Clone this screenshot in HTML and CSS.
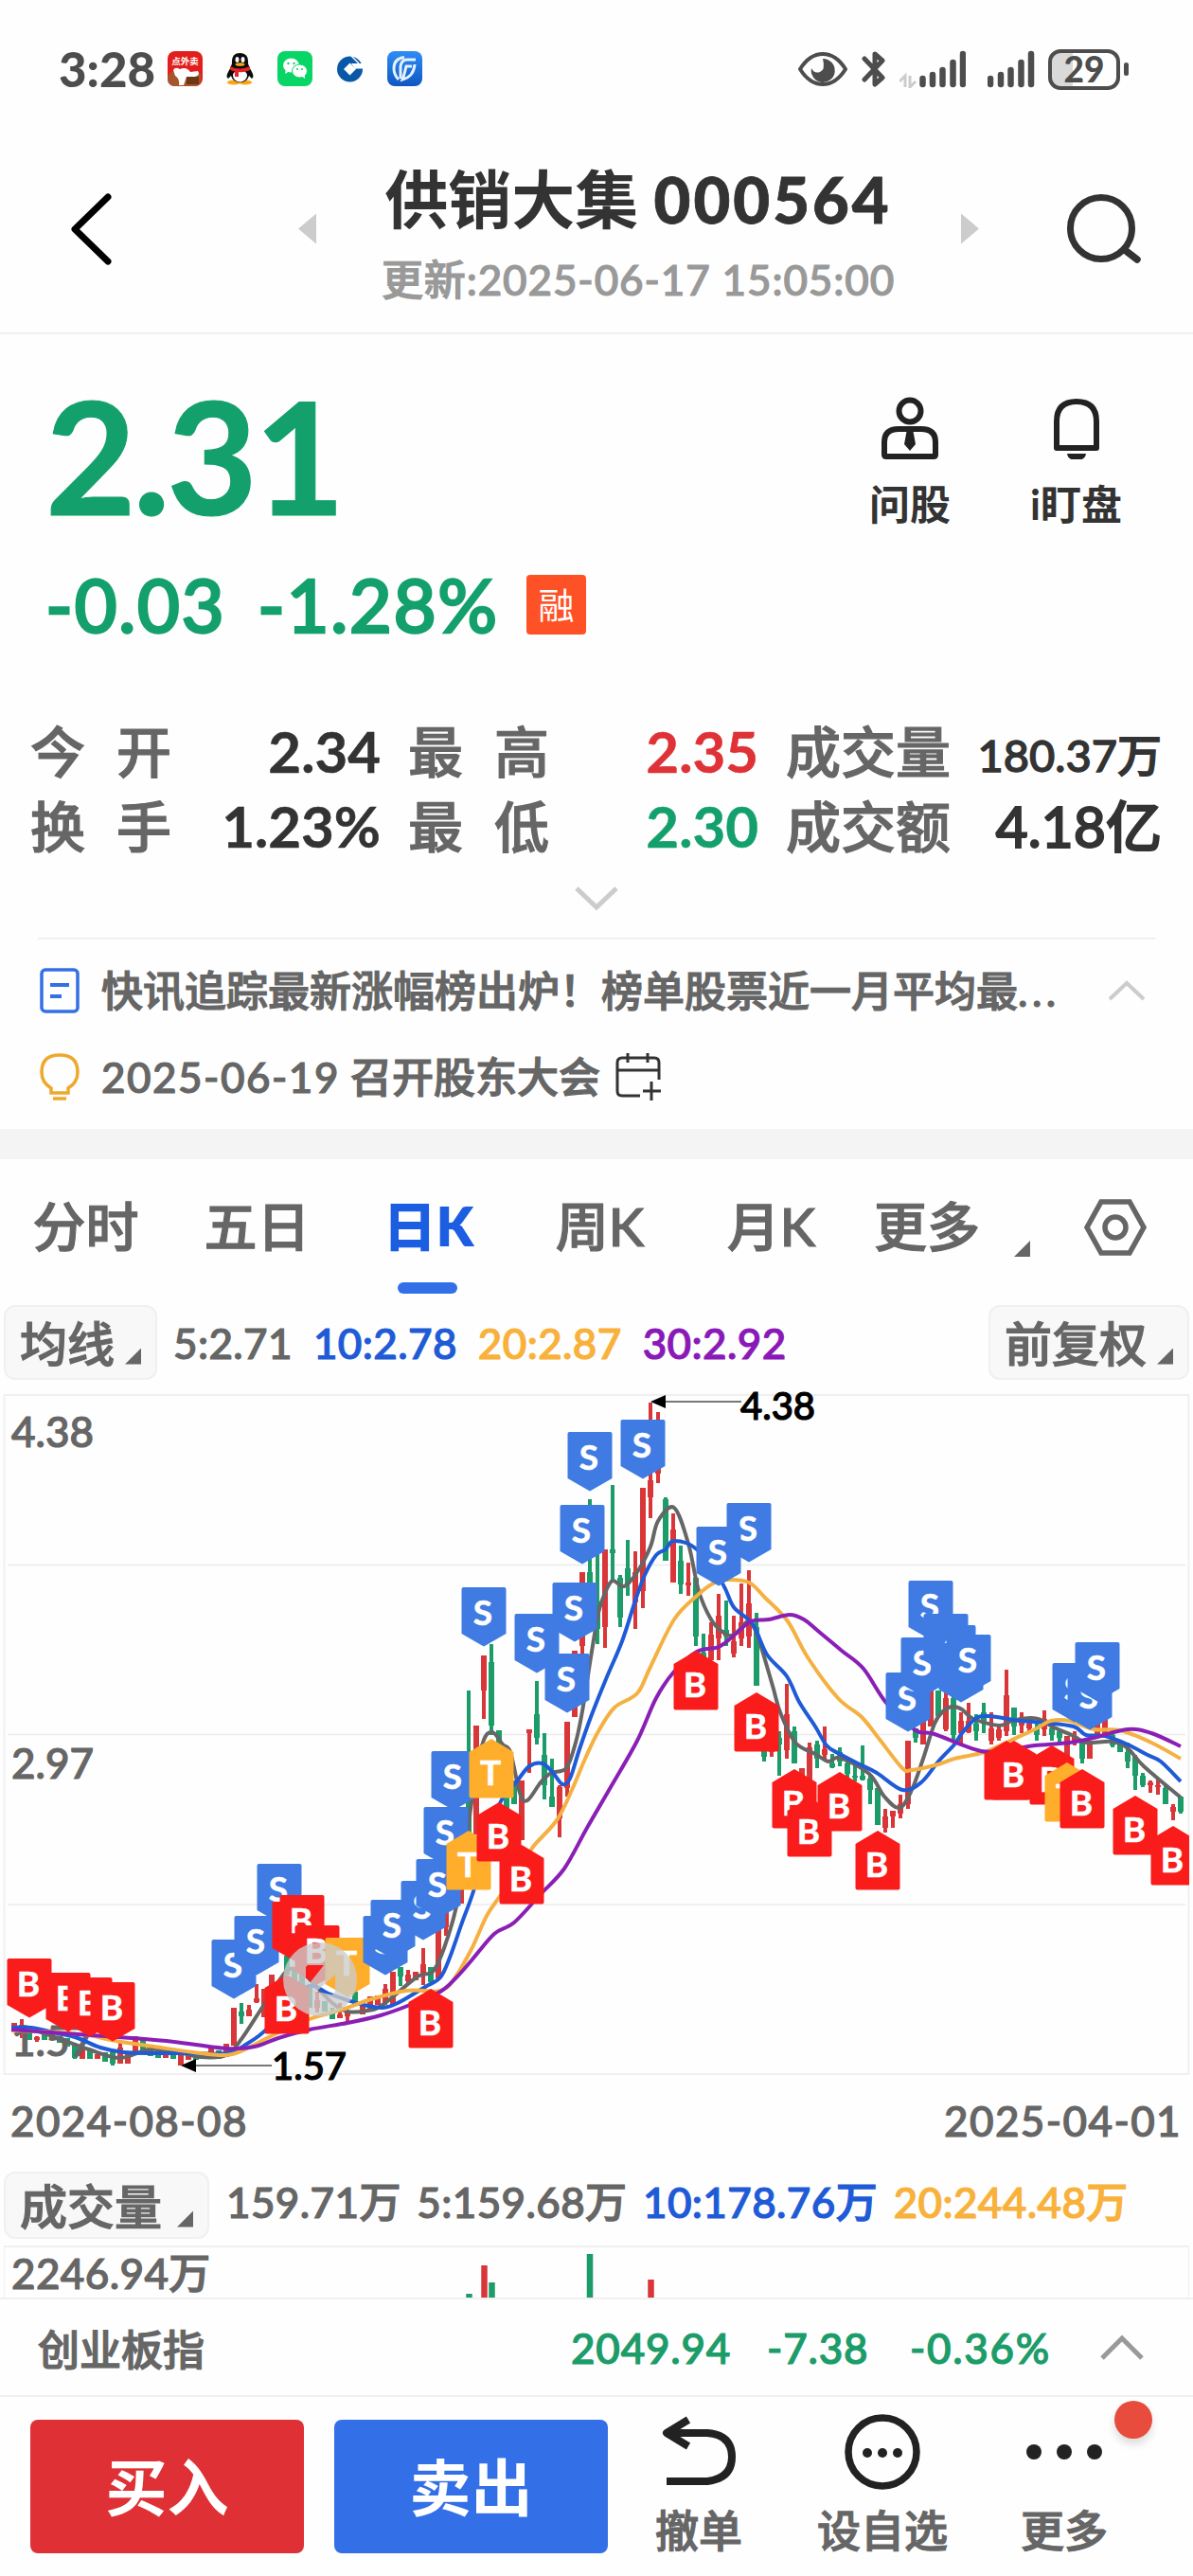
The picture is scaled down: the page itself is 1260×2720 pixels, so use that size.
FILE: index.html
```html
<!DOCTYPE html>
<html lang="zh-CN">
<head>
<meta charset="utf-8">
<title>供销大集 000564</title>
<link rel="stylesheet" href="styles.css">
</head>
<body>
<div class="status">
  <span class="clock">3:28</span>
  <div class="apps">
    <svg width="37" height="37" viewBox="0 0 37 37"><rect width="37" height="37" rx="8" fill="#e21f1c"/><path d="M0 27Q6 17 14 22L35 24V29Q35 37 29 37H8Q0 37 0 29Z" fill="#a5562c"/><path d="M6 20Q8 16 13 19Q20 16 24 22L32 21Q35 25 29 27L20 27L17 36H12Q13 29 8 26Z" fill="#fff"/><rect x="20" y="27" width="13" height="8" fill="#6d3814"/><text x="18.500" y="14" class="tiny">点外卖</text></svg>
    <svg width="37" height="37" viewBox="0 0 37 37"><ellipse cx="12" cy="33" rx="7" ry="2.500" fill="#f7a716"/><ellipse cx="24" cy="33" rx="7" ry="2.500" fill="#f7a716"/><path d="M10 13Q9 2 18.500 2T27 13Q28 17 31 22T31 29L28 26Q26 33 18.500 33T9 26L6 29Q3 27 6 22T10 13Z" fill="#0b0b0b"/><ellipse cx="18.500" cy="26" rx="7.500" ry="6.500" fill="#fff"/><path d="M8 16Q18 21 29 16V20Q22 23 17 22V27H13V21Q9 21 8 19Z" fill="#e52329"/><ellipse cx="15.500" cy="9" rx="2" ry="3" fill="#fff"/><ellipse cx="21.500" cy="9" rx="2" ry="3" fill="#fff"/><ellipse cx="18.500" cy="14" rx="5" ry="1.800" fill="#f7a716"/></svg>
    <svg width="37" height="37" viewBox="0 0 37 37"><rect width="37" height="37" rx="8" fill="#07d566"/><ellipse cx="14.500" cy="15" rx="8.500" ry="7.500" fill="#fff"/><path d="M9 19L8 24L13 21Z" fill="#fff"/><ellipse cx="23.500" cy="21" rx="8" ry="7" fill="#fff" stroke="#07d566"/><path d="M25 26L29 29L29 24Z" fill="#fff"/><g fill="#07d566"><circle cx="11.500" cy="13" r="1.200"/><circle cx="17.500" cy="13" r="1.200"/><circle cx="21" cy="19" r="1"/><circle cx="26" cy="19" r="1"/></g></svg>
    <svg width="37" height="37" viewBox="0 0 37 37"><circle cx="18.500" cy="19" r="13.500" fill="#0a59a8"/><path d="M18.500 12.500L25 19L18.500 25.500L12 19Z" fill="#fff"/><path d="M20 13H34V18.500H24Z" fill="#fff"/><path d="M20 5L28 13" stroke="#fff" stroke-width="1.500"/></svg>
    <svg width="37" height="37" viewBox="0 0 37 37"><defs><linearGradient id="bl" x2="0" y2="1"><stop stop-color="#2f8df6"/><stop offset="1" stop-color="#0f57c0"/></linearGradient></defs><rect width="37" height="37" rx="8" fill="url(#bl)"/><g fill="none" stroke="#e4f1ff" stroke-width="3"><path d="M18 6.500Q7 8 7 18Q7 25 12 30"/><path d="M30 9H21Q15 9 14 16L14 29"/><path d="M26 16H20Q18 25 16 30Q28 27 29 14"/></g></svg>
  </div>
  <div class="signals">
    <svg class="eye" width="52" height="36" viewBox="0 0 52 36"><path d="M2 18Q12 2 26 2T50 18Q40 34 26 34T2 18Z" fill="none" stroke="#4d4d4d" stroke-width="4"/><path d="M26 7A12.500 12.500 0 1 1 14 17Q17 23 23 21T26 7Z" fill="#4d4d4d"/></svg>
    <svg class="bt" width="26" height="40" viewBox="0 0 26 40"><path d="M3 9L22 29L14 36V4L22 11L3 31" fill="none" stroke="#4d4d4d" stroke-width="5" stroke-linecap="round" stroke-linejoin="round"/></svg>
    <svg class="sig" width="70" height="40" viewBox="0 0 70 40"><path d="M0 33L6 27V39M11 27V39L17 33" stroke="#ccc" stroke-width="3" fill="none"/><path d="M24.500 30V36M35 26V36M45.500 21V36M56.500 13V36M67 4V36" stroke="#4d4d4d" stroke-width="6.500" stroke-linecap="round"/></svg>
    <svg class="sig2" width="50" height="40" viewBox="0 0 50 40"><path d="M3 30V36M14 26V36M24.500 21V36M35.500 13V36M46 4V36" stroke="#4d4d4d" stroke-width="6.500" stroke-linecap="round"/></svg>
    <span class="battery">29</span><i class="cap"></i>
  </div>
</div>

<header class="head">
  <svg class="back" width="46" height="78" viewBox="0 0 46 78"><path d="M41 5L6 39L41 73" fill="none" stroke="#000" stroke-width="7" stroke-linecap="round" stroke-linejoin="round"/></svg>
  <i class="prev"></i>
  <div class="title"><h1>供销大集 <b>000564</b></h1><p>更新:2025-06-17 15:05:00</p></div>
  <i class="next"></i>
  <svg class="search" width="82" height="76" viewBox="0 0 82 76"><circle cx="37" cy="37" r="32.500" fill="none" stroke="#333" stroke-width="7"/><path d="M62 60L75 70" stroke="#333" stroke-width="7.500" stroke-linecap="round"/></svg>
</header>

<section class="quote">
  <div class="top">
    <div>
      <div class="price">2.31</div>
      <div class="change"><span class="c1">-0.03</span><span class="c2">-1.28%</span><em>融</em></div>
    </div>
    <div class="actions">
      <div class="act"><svg width="64" height="66" viewBox="0 0 64 66"><g fill="none" stroke="#222" stroke-width="6"><circle cx="32" cy="15" r="11.500"/><path d="M5 61V48Q5 34 20 34H44Q59 34 59 48V61Q59 63 57 63H7Q5 63 5 61Z" stroke-linejoin="round"/></g><path d="M29 34H35L38 50L32 57L26 50Z" fill="#222"/></svg><span>问股</span></div>
      <div class="act"><svg width="50" height="66" viewBox="0 0 50 66"><path d="M4 54V26Q4 5 25 5T46 26V54Z" fill="none" stroke="#222" stroke-width="6" stroke-linejoin="round"/><path d="M15 60H35Q34 67 25 67T15 60Z" fill="#222"/></svg><span>i盯盘</span></div>
    </div>
  </div>
  <div class="stats">
    <div><label><i>今</i><i>开</i></label><b>2.34</b></div>
    <div><label><i>最</i><i>高</i></label><b class="up">2.35</b></div>
    <div><label>成交量</label><b class="small">180.37万</b></div>
    <div><label><i>换</i><i>手</i></label><b>1.23%</b></div>
    <div><label><i>最</i><i>低</i></label><b class="down">2.30</b></div>
    <div><label>成交额</label><b class="amount">4.18亿</b></div>
  </div>
  <div class="more"><svg width="48" height="28" viewBox="0 0 48 28"><path d="M3 3L24 23L45 3" fill="none" stroke="#ccc" stroke-width="5"/></svg></div>
  <div class="news">
    <div class="n1"><svg width="42" height="48" viewBox="0 0 42 48"><rect x="2" y="2" width="38" height="44" rx="4" fill="none" stroke="#3470e4" stroke-width="3.500"/><path d="M11 18H31M11 30H23" stroke="#3470e4" stroke-width="4"/></svg><span>快讯追踪最新涨幅榜出炉！榜单股票近一月平均最<i class="dots">...</i></span><svg class="upc" width="40" height="24" viewBox="0 0 40 24"><path d="M2 21L20 4L38 21" fill="none" stroke="#ccc" stroke-width="4"/></svg></div>
    <div class="n2"><svg width="42" height="50" viewBox="0 0 42 50"><path d="M12 42V37Q2 31 2 20Q2 2 21 2T40 20Q40 31 30 37V42ZM14 48H28" fill="none" stroke="#eda92d" stroke-width="3.500"/></svg><span><i class="day">2025-06-19</i> 召开股东大会</span><svg class="cal" width="48" height="50" viewBox="0 0 48 50"><path d="M26 45H7Q2 45 2 40V10Q2 5 7 5H41Q46 5 46 10V28M2 18H46M13 0V10M34 0V10M29 40H48M38 30V50" fill="none" stroke="#333" stroke-width="3"/></svg></div>
  </div>
</section>

<nav class="tabs">
  <a>分时</a><a>五日</a><a class="on">日K</a><a>周K</a><a>月K</a><a class="last">更多</a><i class="tri"></i>
  <svg width="66" height="60" viewBox="0 0 66 60"><path d="M18 3H48L63 30L48 57H18L3 30Z" fill="none" stroke="#666" stroke-width="5.500"/><circle cx="33" cy="30" r="11" fill="none" stroke="#666" stroke-width="5.500"/></svg>
</nav>
<div class="ma">
  <button>均线<i class="tri"></i></button>
  <div class="vals"><span>5:2.71</span><span class="blue">10:2.78</span><span class="gold">20:2.87</span><span class="violet">30:2.92</span></div>
  <button class="right">前复权<i class="tri"></i></button>
</div>
<svg id="chart" class="chart" width="1260" height="740" viewBox="0 1460 1260 740"></svg>
<div class="dates"><span>2024-08-08</span><span>2025-04-01</span></div>
<div class="ma vol">
  <button>成交量<i class="tri"></i></button>
  <div class="vals"><span>159.71万</span><span>5:159.68万</span><span class="blue">10:178.76万</span><span class="gold">20:244.48万</span></div>
</div>
<div class="volbox"><span>2246.94万</span>
  <svg width="1252" height="53" viewBox="4 2373 1252 53"><path d="M495.500 2422V2426M519.500 2410V2426M623 2380V2426" stroke="#1c9c69" stroke-width="6.500"/><path d="M511.500 2392V2426M687.500 2407V2426" stroke="#d93639" stroke-width="6.500"/></svg>
</div>
<div class="index"><span class="name">创业板指</span><span class="i1">2049.94</span><span class="i2">-7.38</span><span class="i3">-0.36%</span><svg width="46" height="28" viewBox="0 0 46 28"><path d="M2 25L23 4L44 25" fill="none" stroke="#999" stroke-width="5"/></svg></div>
<footer class="bar">
  <button class="buy">买入</button><button class="sell">卖出</button>
  <div class="tool t1"><svg width="78" height="80" viewBox="0 0 78 80"><path d="M28 6L5 20L28 34M6 20H48Q74 22 74 45T48 71H5" fill="none" stroke="#222" stroke-width="8" stroke-linejoin="round"/></svg><span>撤单</span></div>
  <div class="tool t2"><svg width="80" height="80" viewBox="0 0 80 80"><circle cx="40" cy="40" r="36" fill="none" stroke="#222" stroke-width="7.500"/><g fill="#222"><circle cx="24" cy="41" r="5"/><circle cx="40" cy="41" r="5"/><circle cx="56" cy="41" r="5"/></g></svg><span>设自选</span></div>
  <div class="tool t3"><svg width="82" height="80" viewBox="0 0 82 80"><g fill="#222"><circle cx="9" cy="40" r="8"/><circle cx="41" cy="40" r="8"/><circle cx="73" cy="40" r="8"/></g></svg><span>更多</span><i class="dot"></i></div>
</footer>
<script src="chart.js"></script>
</body>
</html>
```

FILE: styles.css
```css
* { box-sizing: border-box; margin: 0; padding: 0; }
body { width: 1260px; height: 2720px; background: #fefefe; font-family: Lato, "Noto Sans CJK SC", sans-serif; font-weight: 500; -webkit-text-stroke: 1.200px currentColor; color: #666; overflow: hidden; }
i, em { font-style: normal; }
svg { display: block; flex: none; }
button { border: 0; font: inherit; color: inherit; -webkit-text-stroke: inherit; }
span, b, p, h1, a { white-space: nowrap; }

.status { display: flex; align-items: center; height: 112px; padding: 34px 68px 0 62px; -webkit-text-stroke: 0; }
.clock { width: 115px; font-size: 51px; line-height: 60px; font-weight: 900; color: #4d4d4d; }
.apps { display: flex; gap: 21px; width: 400px; margin-top: -1px; }
.tiny { font-size: 9.500px; font-weight: 700; fill: #fff; text-anchor: middle; }
.signals { display: flex; align-items: center; margin-left: auto; }
.eye { margin-right: 15px; }
.bt { margin-right: 14px; }
.sig { margin-right: 23px; }
.sig2 { margin-right: 14px; }
.battery { width: 76px; height: 43px; border: 4px solid #4d4d4d; border-radius: 13px; background: linear-gradient(90deg, #d9d9d9 22px, transparent 22px); text-align: center; font-size: 37px; line-height: 34px; font-weight: 900; color: #4d4d4d; }
.cap { width: 5px; height: 14px; margin: 0 0 0 4px; border-radius: 3px; background: #4d4d4d; }

.head { display: flex; align-items: center; height: 241px; padding: 20px 52px 0 73px; border-bottom: 2px solid #f0f0f0; }
.prev, .next { width: 19px; height: 32px; background: #ccc; clip-path: polygon(0 50%, 100% 0, 100% 100%); }
.prev { margin-left: 196px; }
.next { transform: scaleX(-1); }
.title { display: flex; flex-direction: column; align-items: center; width: 542px; margin: 5px 70px 0 69px; }
.title h1 { font-size: 67px; line-height: 94px; font-weight: 700; color: #333; -webkit-text-stroke: 0; }
.title b { letter-spacing: 3px; -webkit-text-stroke: .8px; }
.title p { font-size: 44px; line-height: 60px; margin-top: 8px; letter-spacing: .9px; color: #999; }
.search { margin-left: auto; }

.quote { height: 839px; padding-top: 57px; }
.top { display: flex; justify-content: space-between; height: 268px; padding: 0 75px 0 48px; color: #14a06c; }
.price { font-size: 165px; line-height: 140px; font-weight: 700; letter-spacing: -3.300px; }
.change { display: flex; align-items: center; height: 80px; margin-top: 48px; font-size: 78px; line-height: 82px; letter-spacing: 1.400px; -webkit-text-stroke: 2.400px; }
.c1 { width: 224px; }
.c2 { width: 284px; }
.change em { width: 63px; height: 63px; border-radius: 4px; background: #ff5126; color: #fff; text-align: center; font-size: 38px; line-height: 63px; font-weight: 400; letter-spacing: 0; -webkit-text-stroke: 0; }
.actions { display: flex; gap: 84px; padding-top: 9px; color: #333; }
.act { display: flex; flex-direction: column; align-items: center; font-size: 43px; line-height: 60px; font-weight: 700; -webkit-text-stroke: 0; }
.act span { margin-top: 18px; }
.stats { display: grid; grid-template-columns: 370px 370px 397px; column-gap: 29px; grid-auto-rows: 79px; margin: 75px 32px 0; line-height: 81px; }
.stats div { display: flex; justify-content: space-between; }
.stats label { display: flex; justify-content: space-between; min-width: 149px; font-size: 58px; }
.stats b { font-size: 60px; font-weight: 700; color: #333; -webkit-text-stroke: .5px; }
.stats .small { font-size: 47px; line-height: 88px; font-weight: 500; -webkit-text-stroke: 1.300px; }
.stats .amount { font-size: 59px; font-weight: 500; -webkit-text-stroke: 1.800px; }
.stats .up { color: #df3236; }
.stats .down { color: #14a06c; }
.more { display: flex; align-items: center; justify-content: center; height: 76px; margin-bottom: 3px; }
.news { margin: 0 40px; border-top: 2px solid #f0f0f0; font-size: 44px; }
.news div { display: flex; align-items: center; padding-left: 2px; }
.news span { margin-left: 23px; }
.n1 { height: 80px; margin-top: 14px; }
.n1 span { margin-top: -4px; }
.n2 { height: 102px; }
.n2 span { margin-top: -5px; }
.dots { letter-spacing: 4.500px; }
.day { letter-spacing: 1.500px; }
.upc { margin: 0 10px 0 auto; }
.cal { margin-left: 16px; }

.tabs { display: flex; border-top: 32px solid #f4f4f4; height: 186px; padding-top: 32px; font-size: 56px; line-height: 78px; }
.tabs a { width: 181px; text-align: center; }
.tabs .last { width: 148px; }
.tabs .on { color: #1b5ee2; font-weight: 800; -webkit-text-stroke: 0; }
.tabs .on::after { content: ""; display: block; width: 63px; height: 12px; margin: 20px 0 0 58px; border-radius: 6px; background: #3370e8; }
.tabs svg { margin: 10px 0 0 57px; }
.tri { width: 17px; height: 17px; background: #666; clip-path: polygon(100% 0, 100% 100%, 0 100%); }
.tabs .tri { margin: 54px 0 0 18px; }

.ma { display: flex; height: 79px; margin: 0 4px; justify-content: space-between; }
.ma button { display: flex; align-items: center; gap: 11px; padding: 0 15px 4px 15px; border: 2px solid #f0f0f0; border-radius: 12px; background: #f8f8f8; font-size: 50px; }
.ma button .tri { margin-top: 33px; }
.vals { flex: 1; display: flex; gap: 22px; margin-left: 17px; font-size: 44px; line-height: 80px; letter-spacing: .4px; }
.blue { color: #1f5bd6; }
.gold { color: #f8b13b; }
.violet { color: #8a1ab8; }
.chart { margin-top: 3px; -webkit-text-stroke: 0; }
.chart text { font-family: Lato, sans-serif; }
.chart .scale { font-weight: 500; stroke: #666; stroke-width: 1.200px; }
.chart .callout { font-weight: 500; stroke: #000; stroke-width: 1.200px; }
.dates { display: flex; justify-content: space-between; padding: 0 12px 0 11px; font-size: 44px; line-height: 78px; letter-spacing: 1.400px; }
.vol { height: 71px; margin-top: 15px; }
.vol button { gap: 16px; }
.vol .vals { line-height: 64px; gap: 16.500px; margin-left: 18px; }
.volbox { display: flex; height: 55px; margin: 7px 4px 0; border: solid #f0f0f0; border-width: 2px 1px 0; font-size: 44px; line-height: 54px; letter-spacing: .4px; }
.volbox span { width: 0; padding-left: 7px; }
.volbox svg { margin-left: -8px; }

.index { display: flex; align-items: center; height: 103px; padding: 1px 52px 0 40px; border-top: 2px solid #f0f0f0; font-size: 44px; color: #1c9c69; letter-spacing: .8px; }
.name { width: 563px; color: #666; letter-spacing: 0; }
.i1 { width: 207px; }
.i2 { width: 151px; }
.i3 { letter-spacing: 1.700px; }
.index svg { margin-left: auto; }
.bar { display: flex; height: 191px; padding: 24px 0 0 32px; border-top: 2px solid #f0f0f0; }
.bar button { width: 289px; height: 141px; border-radius: 8px; margin-right: 32px; padding-bottom: 6px; font-size: 65px; font-weight: 700; color: #fff; -webkit-text-stroke: 0; }
.buy { background: #df3035; }
.sell { background: #336fe7; }
.tool { position: relative; display: flex; flex-direction: column; align-items: center; width: 192px; margin-top: -6px; font-size: 46px; line-height: 60px; }
.tool span { margin-top: 13px; }
.t1 { width: 128px; }
.t2 { margin-left: 34px; }
.dot { position: absolute; top: -14px; right: 3px; width: 40px; height: 40px; border-radius: 50%; background: #e74c3c; box-shadow: 0 6px 8px #0002; }
```

FILE: chart.js
```js
const RED = '#d93639', GREEN = '#1c9c69';
const out = [];
const step = 8, origin = 15;

// frame and grid
out.push('<rect x="4.5" y="1473" width="1251" height="717" fill="none" stroke="#f0f0f0" stroke-width="2"/>');
out.push('<path d="M8 1652.500H1252M8 1831.500H1252M8 2011H1252" stroke="#ebebeb" stroke-width="1.500"/>');

// index, direction, high, low, body top, body bottom
const candles = `0r2136,2145 1r2132,2152,2138,2146 2g2145,2154 3r2150,2156,2151,2154 4g2147,2154 5r2148,2154 6g2150,2157 7g2152,2161 8g2157,2174,2160,2173 9r2163,2174 10g2163,2174 11r2169,2174 12g2167,2177 13g2165,2181,2167,2179 14r2157,2179,2162,2179 15r2168,2179 16r2150,2168 17g2153,2166 18g2165,2171 19g2165,2173 20r2167,2173 21g2167,2174 22r2167,2181 23r2168,2175 24g2168,2175 25r2168,2174 26r2162,2174 27g2165,2174 28r2158,2172 29r2120,2160 30g2115,2137,2124,2129 31r2117,2129,2122,2129 32r2095,2115,2110,2114 33r2100,2130 34r2085,2120 36g2065,2085 37g2078,2097 38g2080,2100 39g2096,2120 40r2103,2125,2112,2120 41g2113,2124 42g2120,2132,2126,2132 43r2115,2131,2127,2131 44r2125,2135,2125,2129 45g2103,2118 46r2117,2127 47r2108,2123 48r2107,2117 49r2095,2117,2100,2115 50r2082,2117 51g2077,2097,2077,2087 52r2080,2096,2085,2092 53r2082,2091 54r2057,2096,2074,2085 55g2077,2093 56r2037,2089 57r2018,2044,2018,2035 58g1987,2007 59r1960,2010 60g1785,1935,1850,1935 61r1822,1937 62r1748,1815,1748,1785 63g1736,1832,1755,1822 64g1827,1860 65g1850,1912 66g1880,1905 67r1880,1943 68r1826,1872,1826,1830 69g1775,1842,1810,1835 70g1830,1900,1853,1885 71g1857,1908,1897,1908 72r1885,1940,1887,1920 73r1818,1897,1818,1888 74r1743,1813 75r1660,1750,1660,1738 76g1583,1700,1660,1700 77g1640,1736,1700,1720 78r1636,1740,1636,1718 79g1568,1670,1636,1640 80g1663,1718,1666,1708 81g1626,1685,1656,1673 82r1638,1720,1660,1692 83r1571,1698,1571,1680 84r1481,1603,1563,1581 85r1491,1566,1500,1556 86g1581,1648,1583,1648 87r1598,1671,1615,1671 88g1632,1683,1648,1673 89r1650,1685,1671,1674 90g1666,1738,1666,1728 91g1725,1760,1745,1760 92r1713,1753,1726,1753 93r1683,1753,1706,1730 94g1690,1738,1721,1728 95r1706,1750,1733,1746 96r1672,1738,1713,1730 97r1658,1740,1693,1728 98g1703,1780,1718,1780 99g1840,1860,1843,1855 100r1840,1855,1843,1850 101g1828,1875,1835,1842 102r1778,1857,1810,1848 103g1823,1862,1828,1862 104r1867,1875 105r1840,1880,1845,1880 106g1838,1867,1842,1857 107r1823,1857,1847,1853 108g1852,1867,1862,1866 109g1845,1865,1850,1860 110g1858,1882,1862,1873 111g1863,1881,1875,1877 112g1843,1880,1875,1879 113g1873,1905,1878,1890 114g1888,1927 115r1910,1935,1918,1930 116r1912,1930,1912,1918 117r1895,1920,1905,1915 118r1838,1910,1838,1905 119g1825,1840,1825,1835 120r1817,1842 121r1785,1823 122g1785,1812 123r1787,1828,1793,1826 124g1790,1837,1793,1832 125r1808,1842,1817,1830 126r1798,1830,1817,1829 127g1810,1838,1820,1828 128g1798,1830,1808,1820 129r1808,1842,1825,1838 130r1823,1838,1826,1835 131r1763,1833,1790,1828 132g1803,1832,1803,1823 133r1808,1830,1813,1822 134r1815,1830,1820,1825 135g1817,1838,1825,1832 136r1806,1833,1815,1826 137g1823,1838,1825,1832 138g1826,1840,1828,1835 139r1833,1855 140r1828,1843,1833,1840 141g1837,1862,1837,1857 142r1838,1857 143r1817,1832 144r1815,1832 145g1828,1845,1832,1843 146g1838,1850 147g1840,1867,1850,1860 148g1853,1890,1855,1875 149g1872,1887,1875,1885 150r1880,1893,1882,1885 151r1877,1895,1885,1887 152g1885,1905,1888,1905 153r1905,1922,1908,1913 154g1897,1915,1897,1913`;
for (const item of candles.split(' ')) {
  const [, index, side, values] = item.match(/^(\d+)([rg])(.+)$/);
  const [high, low, top = high, bottom = low] = values.split(',').map(Number);
  const x = origin + index * step, color = side === 'r' ? RED : GREEN;
  out.push(`<path d="M${x} ${high}V${low}" stroke="${color}" stroke-width="4"/><path d="M${x} ${top}V${bottom}" stroke="${color}" stroke-width="6"/>`);
}

// scale labels
const label = (x, y, t, size, cls, fill) => out.push(`<text class="${cls}" x="${x}" y="${y}" font-size="${size}" fill="${fill}">${t}</text>`);
label(12, 1528, '4.38', 44, 'scale', '#666');
label(12, 1878, '2.97', 44, 'scale', '#666');
label(12, 2171, '1.57', 44, 'scale', '#666');

// moving averages
const lines = {
  '#666': '15,2142 33,2143 61,2152 94,2164 127,2173 157,2164 184,2166 212,2172 239,2170 255,2153 278,2118 302,2082 316,2081 327,2090 351,2115 367,2124 388,2123 404,2117 441,2087 457,2082 469,2057 482,2013 490,1963 500,1890 510,1840 520,1829 531,1842 539,1850 549,1893 557,1901 571,1882 582,1872 598,1867 608,1840 615,1807 624,1750 632,1703 639,1682 647,1669 659,1675 673,1660 687,1633 695,1606 712,1592 727,1630 738,1680 751,1710 763,1723 773,1727 783,1719 791,1712 800,1727 816,1780 824,1808 840,1840 861,1852 875,1860 887,1856 918,1873 934,1897 950,1909 963,1890 975,1857 987,1820 996,1807 1006,1802 1016,1805 1028,1815 1055,1822 1069,1817 1089,1814 1102,1817 1111,1823 1134,1833 1147,1840 1175,1839 1191,1846 1208,1865 1247,1898',
  '#1f5bd6': '12,2141 33,2141 61,2147 82,2152 106,2162 131,2167 163,2168 196,2168 239,2168 261,2158 282,2142 300,2115 327,2097 347,2105 367,2112 384,2117 404,2120 420,2115 449,2098 465,2088 475,2067 488,2030 500,1997 514,1947 529,1902 545,1882 559,1865 573,1862 584,1872 594,1884 602,1878 612,1847 624,1813 640,1773 657,1733 671,1690 681,1663 693,1642 703,1636 712,1627 736,1636 763,1672 775,1697 795,1715 810,1747 831,1770 844,1797 861,1823 873,1843 885,1851 906,1862 926,1872 953,1890 973,1882 991,1860 1008,1842 1016,1830 1030,1815 1044,1812 1077,1817 1102,1819 1134,1823 1147,1832 1167,1833 1191,1842 1212,1853 1226,1860 1247,1881',
  '#f4b142': '12,2144 61,2146 94,2149 122,2155 163,2161 204,2167 239,2170 261,2163 286,2150 327,2132 347,2126 367,2120 392,2111 429,2102 449,2102 465,2102 478,2092 498,2058 514,2023 529,2001 551,1970 563,1950 588,1922 604,1890 618,1857 632,1828 649,1803 673,1788 687,1760 712,1710 736,1685 753,1672 767,1668 791,1671 808,1687 832,1712 853,1750 885,1793 910,1813 930,1838 953,1867 963,1869 991,1863 1008,1857 1040,1850 1069,1837 1093,1826 1110,1817 1130,1817 1155,1826 1183,1827 1216,1840 1247,1857',
  '#8a1fb5': '12,2143 82,2148 139,2152 184,2156 239,2163 269,2161 294,2152 327,2143 367,2136 402,2128 433,2117 465,2103 482,2088 498,2070 522,2042 543,2030 571,2000 596,1973 620,1930 645,1887 673,1838 693,1793 712,1765 736,1744 759,1739 775,1727 793,1712 812,1710 834,1705 849,1710 865,1723 889,1743 912,1762 936,1798 967,1827 987,1831 1036,1849 1069,1847 1093,1843 1130,1840 1155,1835 1191,1826 1216,1830 1247,1844'
};
for (const [color, data] of Object.entries(lines)) {
  const p = data.split(' ').map(s => s.split(',').map(Number));
  let d = `M${p[0]}`;
  for (let i = 0; i < p.length - 1; i++) {
    const a = p[i - 1] || p[i], b = p[i], c = p[i + 1], e = p[i + 2] || c;
    d += `C${b[0] + (c[0] - a[0]) / 6} ${b[1] + (c[1] - a[1]) / 6} ${c[0] - (e[0] - b[0]) / 6} ${c[1] - (e[1] - b[1]) / 6} ${c}`;
  }
  out.push(`<path d="${d}" fill="none" stroke="${color}" stroke-width="4"/>`);
}

// extreme price callouts
out.push('<path d="M695 1480H783M198 2181H287" stroke="#777" stroke-width="2"/><path d="M687 1480L703 1473V1487ZM191 2181L207 2174V2188Z" fill="#000"/>');
label(782, 1499, '4.38', 40, 'callout', '#000');
label(287, 2196, '1.57', 40, 'callout', '#000');

// trade markers: label, side the tip is on, centre x, top y
const markers = `Bd31,2068 Bd72,2083 Bd95,2088 Bd119,2093 Sd247,2048 Sd271,2023 Sd295,1968 Bd311,2008 Bd319,2001 Bd335,2033 Td367,2046 Bu303,2085 Sd407,2023 Sd415,2006 Sd447,1986 Sd463,1963 Sd479,1849 Sd471,1908 Bu455,2100 Tu495,1933 Tu519,1836 Bu527,1903 Bu551,1948 Sd511,1676 Sd567,1704 Sd607,1671 Sd599,1746 Sd615,1589 Sd623,1512 Sd679,1499 Sd791,1587 Sd759,1612 Bu735,1743 Bu799,1787 Bu839,1868 Bu855,1898 Bu887,1871 Bu927,1933 Sd959,1766 Sd983,1669 Sd975,1729 Sd999,1704 Sd1007,1716 Sd1015,1735 Sd1023,1726 Bu1063,1838 Bu1071,1838 Bu1111,1843 Tu1127,1861 Bu1143,1868 Sd1135,1756 Sd1151,1764 Sd1159,1734 Bu1199,1896 Bu1239,1928`;
const fills = { S: '#3f7be2', B: '#fa1c1a', T: '#ffae2b' };
out.push('<clipPath id="plot"><rect x="4" y="1460" width="1252" height="740"/></clipPath><g clip-path="url(#plot)">');
for (const item of markers.split(' ')) {
  const [, kind, tip, cx, top] = item.match(/^(.)(.)(\d+),(\d+)$/);
  const shape = tip === 'd'
    ? 'M-23.500 2Q-23.500 0 -21.500 0H21.500Q23.500 0 23.500 2V49L0 62.500L-23.500 49Z'
    : 'M-23.500 14L0 0L23.500 14V60.500Q23.500 62.500 21.500 62.500H-21.500Q-23.500 62.500 -23.500 60.500Z';
  out.push(`<g transform="translate(${cx} ${top})"><path d="${shape}" fill="${fills[kind]}"/><text x="-1" y="${tip === 'd' ? 40 : 49}" font-size="37" font-weight="700" text-anchor="middle" fill="#fff" stroke="#fff" stroke-width=".6">${kind}</text></g>`);
}
out.push('</g>');

// floating expand handle
out.push('<path fill-rule="evenodd" d="M299 2090A39 39 0 1 0 377 2090A39 39 0 1 0 299 2090ZM325 2075H342L327 2094L323 2090V2077ZM354 2085V2103Q353 2106 350 2106L334 2103Z" fill="#ccc" fill-opacity=".78"/>');

document.getElementById('chart').innerHTML = out.join('');
```
